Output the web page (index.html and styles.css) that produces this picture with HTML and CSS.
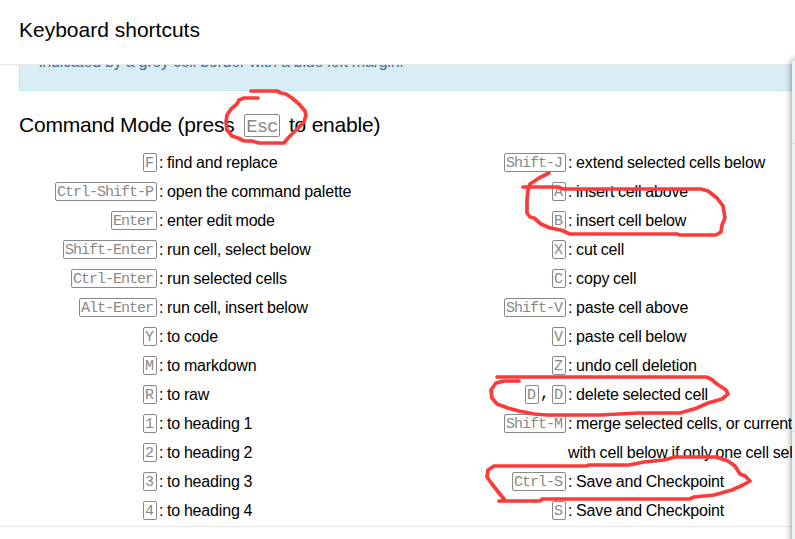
FILE: index.html
```
<!DOCTYPE html>
<html lang="en">
<head>
    <meta charset="UTF-8">
    <title>Keyboard shortcuts</title>
    <link rel="stylesheet" href="styles.css">
</head>
<body>

    <div class="modal">
        <div class="modal-header">
            <h4>Keyboard shortcuts</h4>
        </div>
        <div class="modal-body">
            <div class="alert"><p>indicated by a grey cell border with a blue left margin.</p></div>
            <h4 class="mode">Command Mode (press <kbd>Esc</kbd> to enable)</h4>
            <div class="columns">
                <div class="column left">
                    <div class="row"><span class="keys"><kbd>F</kbd></span><span class="help">: find and replace</span></div>
                    <div class="row"><span class="keys"><kbd>Ctrl-Shift-P</kbd></span><span class="help">: open the command palette</span></div>
                    <div class="row"><span class="keys"><kbd>Enter</kbd></span><span class="help">: enter edit mode</span></div>
                    <div class="row"><span class="keys"><kbd>Shift-Enter</kbd></span><span class="help">: run cell, select below</span></div>
                    <div class="row"><span class="keys"><kbd>Ctrl-Enter</kbd></span><span class="help">: run selected cells</span></div>
                    <div class="row"><span class="keys"><kbd>Alt-Enter</kbd></span><span class="help">: run cell, insert below</span></div>
                    <div class="row"><span class="keys"><kbd>Y</kbd></span><span class="help">: to code</span></div>
                    <div class="row"><span class="keys"><kbd>M</kbd></span><span class="help">: to markdown</span></div>
                    <div class="row"><span class="keys"><kbd>R</kbd></span><span class="help">: to raw</span></div>
                    <div class="row"><span class="keys"><kbd>1</kbd></span><span class="help">: to heading 1</span></div>
                    <div class="row"><span class="keys"><kbd>2</kbd></span><span class="help">: to heading 2</span></div>
                    <div class="row"><span class="keys"><kbd>3</kbd></span><span class="help">: to heading 3</span></div>
                    <div class="row"><span class="keys"><kbd>4</kbd></span><span class="help">: to heading 4</span></div>
                </div>
                <div class="column right">
                    <div class="row"><span class="keys"><kbd>Shift-J</kbd></span><span class="help">: extend selected cells below</span></div>
                    <div class="row"><span class="keys"><kbd>A</kbd></span><span class="help">: insert cell above</span></div>
                    <div class="row"><span class="keys"><kbd>B</kbd></span><span class="help">: insert cell below</span></div>
                    <div class="row"><span class="keys"><kbd>X</kbd></span><span class="help">: cut cell</span></div>
                    <div class="row"><span class="keys"><kbd>C</kbd></span><span class="help">: copy cell</span></div>
                    <div class="row"><span class="keys"><kbd>Shift-V</kbd></span><span class="help">: paste cell above</span></div>
                    <div class="row"><span class="keys"><kbd>V</kbd></span><span class="help">: paste cell below</span></div>
                    <div class="row"><span class="keys"><kbd>Z</kbd></span><span class="help">: undo cell deletion</span></div>
                    <div class="row"><span class="keys"><kbd>D</kbd><span class="comma">,</span><kbd>D</kbd></span><span class="help">: delete selected cell</span></div>
                    <div class="row"><span class="keys"><kbd>Shift-M</kbd></span><span class="help">: merge selected cells, or current<br>with cell below if only one cell sele</span></div>
                    <div class="row"><span class="keys"><kbd>Ctrl-S</kbd></span><span class="help">: Save and Checkpoint</span></div>
                    <div class="row"><span class="keys"><kbd>S</kbd></span><span class="help">: Save and Checkpoint</span></div>
                </div>
            </div>
        </div>
        <div class="modal-footer"></div>
    </div>

    <div class="side-panel"></div>

    <!-- red pen marks -->
    <svg class="marks" width="795" height="539" viewBox="0 0 795 539">
        <path d="M251 91H277L281 93L286 94L292 98L299 104L305 111L306 115L304 122L300 126L294 132L288 138L284 143H259L252 141H244L238 138L232 136L227 130L226 122L227 115L231 109L237 104L239 100L244 98H258"/>
        <path d="M549 173L539 178L530 184L528 190L527 200V213L530 217L534 218L541 224L550 228L561 230L570 234H677L680 235H716L721 232L722 225L725 218L723 206L717 198L708 191L701 189H563L558 187H523"/>
        <path d="M497 377H706L711 379L717 384L726 390L728 394L722 399L708 403L697 408L680 413H638L600 415H547L534 414L519 411L508 408L497 404L492 398L491 390L496 383L504 381H519"/>
        <path d="M499 501H540L542 499H690L694 497L714 495L732 490L743 485L750 481L745 476L740 474L735 466L728 461L716 457H675L664 460L644 462L629 465H589L586 466H494L488 470L487 477L492 484L499 493L504 499"/>
    </svg>

</body>
</html>
```
FILE: styles.css
```
body {
    margin: 0;
    width: 795px;
    height: 539px;
    overflow: hidden;
    background: #fff;
    color: #000;
    font-family: "Liberation Sans", Arial, sans-serif;
    font-size: 16px;
}

.modal {
    display: flex;
    flex-direction: column;
    height: 539px;
}

.modal-header {
    box-sizing: border-box;
    height: 65px;
    padding: 15px 19px;
    border-bottom: 1px solid #e5e5e5;
}

h4 {
    margin: 0;
    font-size: 21px;
    font-weight: normal;
    line-height: 30px;
}

.modal-body {
    height: 461px;
    overflow: hidden;
}

.alert {
    display: flex;
    box-sizing: border-box;
    height: 26px;
    margin-left: 19px;
    padding-left: 19px;
    border: 1px solid #bce8f1;
    border-top: 0;
    border-right: 0;
    border-bottom-left-radius: 2px;
    background: #d9edf7;
    color: #31708f;
}

.alert p {
    margin: -13px 0 0;
    line-height: 20px;
    letter-spacing: -0.24px;
}

/* Key caps */
kbd {
    box-sizing: border-box;
    display: inline-block;
    height: 19px;
    padding: 0 3px 0 1px;
    border: 1px solid #888;
    border-radius: 2px;
    color: #888;
    font-family: "Liberation Mono", monospace;
    font-size: 15px;
    letter-spacing: -1px;
    line-height: 20px;
}

.mode {
    display: flex;
    align-items: center;
    height: 30px;
    margin: 19px 0 8px 19px;
    letter-spacing: -0.2px;
    white-space: pre;
}

.mode kbd {
    width: 36px;
    height: 23px;
    margin: 0 3px 0 4px;
    font-size: 19px;
    line-height: 24px;
}

/* Shortcut lists */
.columns {
    display: flex;
}

.column {
    flex: none;
    width: 409px;
}

.row {
    display: flex;
    line-height: 29px;
}

.keys {
    display: flex;
    flex: none;
    justify-content: flex-end;
    align-items: center;
    width: 157px;
    height: 29px;
    margin-right: 2px;
}

.comma {
    width: 13px;
    font-family: "Liberation Mono", monospace;
    text-indent: 1px;
}

.help {
    letter-spacing: -0.16px;
    word-spacing: -0.5px;
    white-space: nowrap;
}

.modal-footer {
    flex: 1;
    border-top: 1px solid #e5e5e5;
}

/* Notebook edge behind the dialog */
.side-panel {
    position: absolute;
    top: 60px;
    left: 792px;
    width: 20px;
    height: 500px;
    border-top-left-radius: 3px;
    background: linear-gradient(#d0e5df, #d0e5df) 0 83px / 100% 1px no-repeat,
                linear-gradient(#d0e5df, #d0e5df) 0 371px / 100% 1px no-repeat,
                #e6f5f1;
    box-shadow: 0 0 7px rgba(0, 0, 0, 0.5);
}

.marks {
    position: absolute;
    top: 0;
    left: 0;
    fill: none;
    stroke: #fc3a3a;
    stroke-width: 3.7;
    stroke-linecap: round;
    stroke-linejoin: round;
}
```
